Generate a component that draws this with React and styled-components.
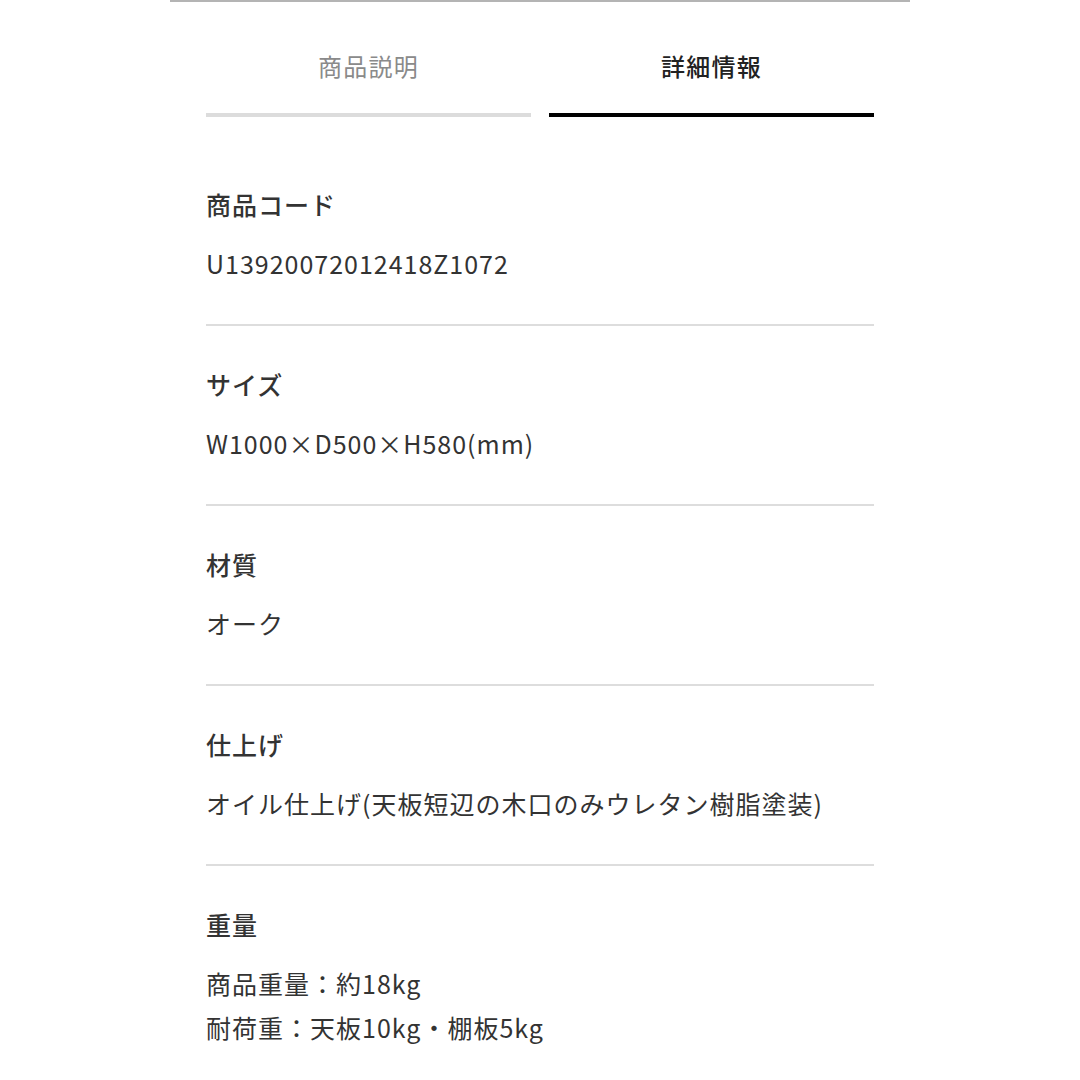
import React from "react";
import styled, { createGlobalStyle } from "styled-components";

const GlobalStyle = createGlobalStyle`
  body {
    margin: 0;
    background: #fff;
    font-family: "Noto Sans CJK JP", "Noto Sans", sans-serif;
    color: #333;
  }
`;

const details = [
  { label: "商品コード", values: ["U13920072012418Z1072"] },
  { label: "サイズ", values: ["W1000×D500×H580(mm)"] },
  { label: "材質", values: ["オーク"] },
  { label: "仕上げ", values: ["オイル仕上げ(天板短辺の木口のみウレタン樹脂塗装)"] },
  { label: "重量", values: ["商品重量：約18kg", "耐荷重：天板10kg・棚板5kg"] },
];

export default function App() {
  return (
    <>
      <GlobalStyle />
      <Wrapper>
        <Inner>
          <Tabs>
            <Tab>商品説明</Tab>
            <Tab active>詳細情報</Tab>
          </Tabs>
          <List>
            {details.map((d) => (
              <Row key={d.label}>
                <Label>{d.label}</Label>
                <Values>
                  {d.values.map((v) => (
                    <Value key={v}>{v}</Value>
                  ))}
                </Values>
              </Row>
            ))}
          </List>
        </Inner>
      </Wrapper>
    </>
  );
}

const Wrapper = styled.div`
  width: 740px;
  margin: 0 auto;
  border-top: 2px solid #b4b4b4;
`;

const Inner = styled.div`
  padding: 0 36px;
`;

const Tabs = styled.div`
  display: grid;
  grid-template-columns: 1fr 1fr;
  column-gap: 18px;
`;

const Tab = styled.div`
  padding: 44px 0 27px;
  line-height: 40px;
  font-size: 24px;
  letter-spacing: 0.05em;
  text-align: center;
  font-weight: ${(p) => (p.active ? 500 : 400)};
  color: ${(p) => (p.active ? "#222" : "#8a8a8a")};
  border-bottom: 4px solid ${(p) => (p.active ? "#000" : "#dcdcdc")};
  cursor: pointer;
`;

const List = styled.div`
  padding-top: 29px;
`;

const Row = styled.div`
  padding: 40px 0 39px;
  border-bottom: 2px solid #dddddd;
  &:last-child {
    border-bottom: none;
  }
`;

const Label = styled.div`
  font-size: 25px;
  line-height: 36px;
  font-weight: 500;
  letter-spacing: 0.04em;
  color: #333;
`;

const Values = styled.div`
  margin-top: 19px;
`;

const Value = styled.div`
  font-size: 25px;
  line-height: 44px;
  letter-spacing: 0.04em;
  color: #333;
`;
